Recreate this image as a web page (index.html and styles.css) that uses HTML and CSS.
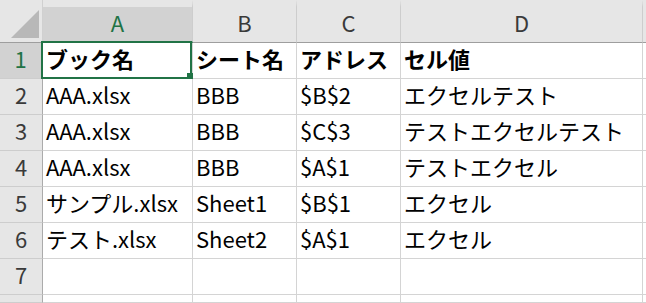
FILE: index.html
```html
<!DOCTYPE html>
<html lang="ja">
<head>
<meta charset="utf-8">
<title>Sheet</title>
<link rel="stylesheet" href="styles.css">
</head>
<body>
<div class="sheet">
  <div class="corner"><svg class="tri" width="43" height="43" viewBox="0 0 43 43"><polygon points="11,38 39,38 39,10" fill="#b8b8b8"/></svg></div>
  <div class="colhead sel">A</div>
  <div class="colhead">B</div>
  <div class="colhead">C</div>
  <div class="colhead">D</div>
  <div class="colhead last"></div>

  <div class="rowhead sel">1</div>
  <div class="cell bold active">ブック名<div class="selbox"><span class="handle"></span></div></div>
  <div class="cell bold">シート名</div>
  <div class="cell bold">アドレス</div>
  <div class="cell bold">セル値</div>
  <div class="cell"></div>

  <div class="rowhead">2</div>
  <div class="cell">AAA.xlsx</div>
  <div class="cell">BBB</div>
  <div class="cell">$B$2</div>
  <div class="cell">エクセルテスト</div>
  <div class="cell"></div>

  <div class="rowhead">3</div>
  <div class="cell">AAA.xlsx</div>
  <div class="cell">BBB</div>
  <div class="cell">$C$3</div>
  <div class="cell">テストエクセルテスト</div>
  <div class="cell"></div>

  <div class="rowhead">4</div>
  <div class="cell">AAA.xlsx</div>
  <div class="cell">BBB</div>
  <div class="cell">$A$1</div>
  <div class="cell">テストエクセル</div>
  <div class="cell"></div>

  <div class="rowhead">5</div>
  <div class="cell">サンプル.xlsx</div>
  <div class="cell">Sheet1</div>
  <div class="cell">$B$1</div>
  <div class="cell">エクセル</div>
  <div class="cell"></div>

  <div class="rowhead">6</div>
  <div class="cell">テスト.xlsx</div>
  <div class="cell">Sheet2</div>
  <div class="cell">$A$1</div>
  <div class="cell">エクセル</div>
  <div class="cell"></div>

  <div class="rowhead">7</div>
  <div class="cell"></div>
  <div class="cell"></div>
  <div class="cell"></div>
  <div class="cell"></div>
  <div class="cell"></div>

  <div class="rowhead"></div>
  <div class="cell"></div>
  <div class="cell"></div>
  <div class="cell"></div>
  <div class="cell"></div>
  <div class="cell"></div>
</div>
</body>
</html>
```

FILE: styles.css
```css
html, body {
  margin: 0;
  padding: 0;
  background: #ffffff;
  overflow: hidden;
}
body {
  width: 646px;
  height: 303px;
  font-family: "Noto Sans CJK JP", "Noto Sans", sans-serif;
  font-size: 22px;
  color: #000;
}
.sheet {
  display: grid;
  grid-template-columns: 43px 150px 104px 104px 242px 3px;
  grid-template-rows: 43px repeat(7, 36px) 8px;
  width: 646px;
  height: 303px;
  overflow: hidden;
}
.sheet > div {
  box-sizing: border-box;
  white-space: nowrap;
}
.corner {
  background: #e6e6e6;
  border-bottom: 1px solid #9e9e9e;
  border-right: 1px solid #d0d0d0;
}
.tri {
  display: block;
}
.colhead {
  background: #e6e6e6;
  border-top: 7px solid #e6e6e6;
  border-right: 1px solid #cdcdcd;
  border-bottom: 1px solid #9e9e9e;
  text-align: center;
  line-height: 31px;
  color: #3a3a3a;
  background-clip: padding-box;
}
.colhead.sel {
  background-color: #d2d2d2;
  color: #217346;
  border-bottom: 2px solid #217346;
}
.colhead.last {
  border-right: none;
}
.rowhead {
  background: #e6e6e6;
  border-right: 1px solid #ababab;
  border-bottom: 1px solid #cdcdcd;
  text-align: center;
  line-height: 31px;
  color: #3a3a3a;
}
.rowhead.sel {
  background: #d2d2d2;
  color: #217346;
  border-right: 2px solid #217346;
}
.cell {
  border-right: 1px solid #d4d4d4;
  border-bottom: 1px solid #d4d4d4;
  line-height: 31px;
  padding-left: 3px;
}
.bold {
  font-weight: 700;
}
.active {
  position: relative;
}
.selbox {
  position: absolute;
  left: -2px;
  top: -2px;
  right: 0;
  bottom: -1px;
  border: 2px solid #217346;
  z-index: 2;
}
.handle {
  position: absolute;
  right: -3px;
  bottom: -2px;
  width: 6px;
  height: 6px;
  background: #217346;
}
```
